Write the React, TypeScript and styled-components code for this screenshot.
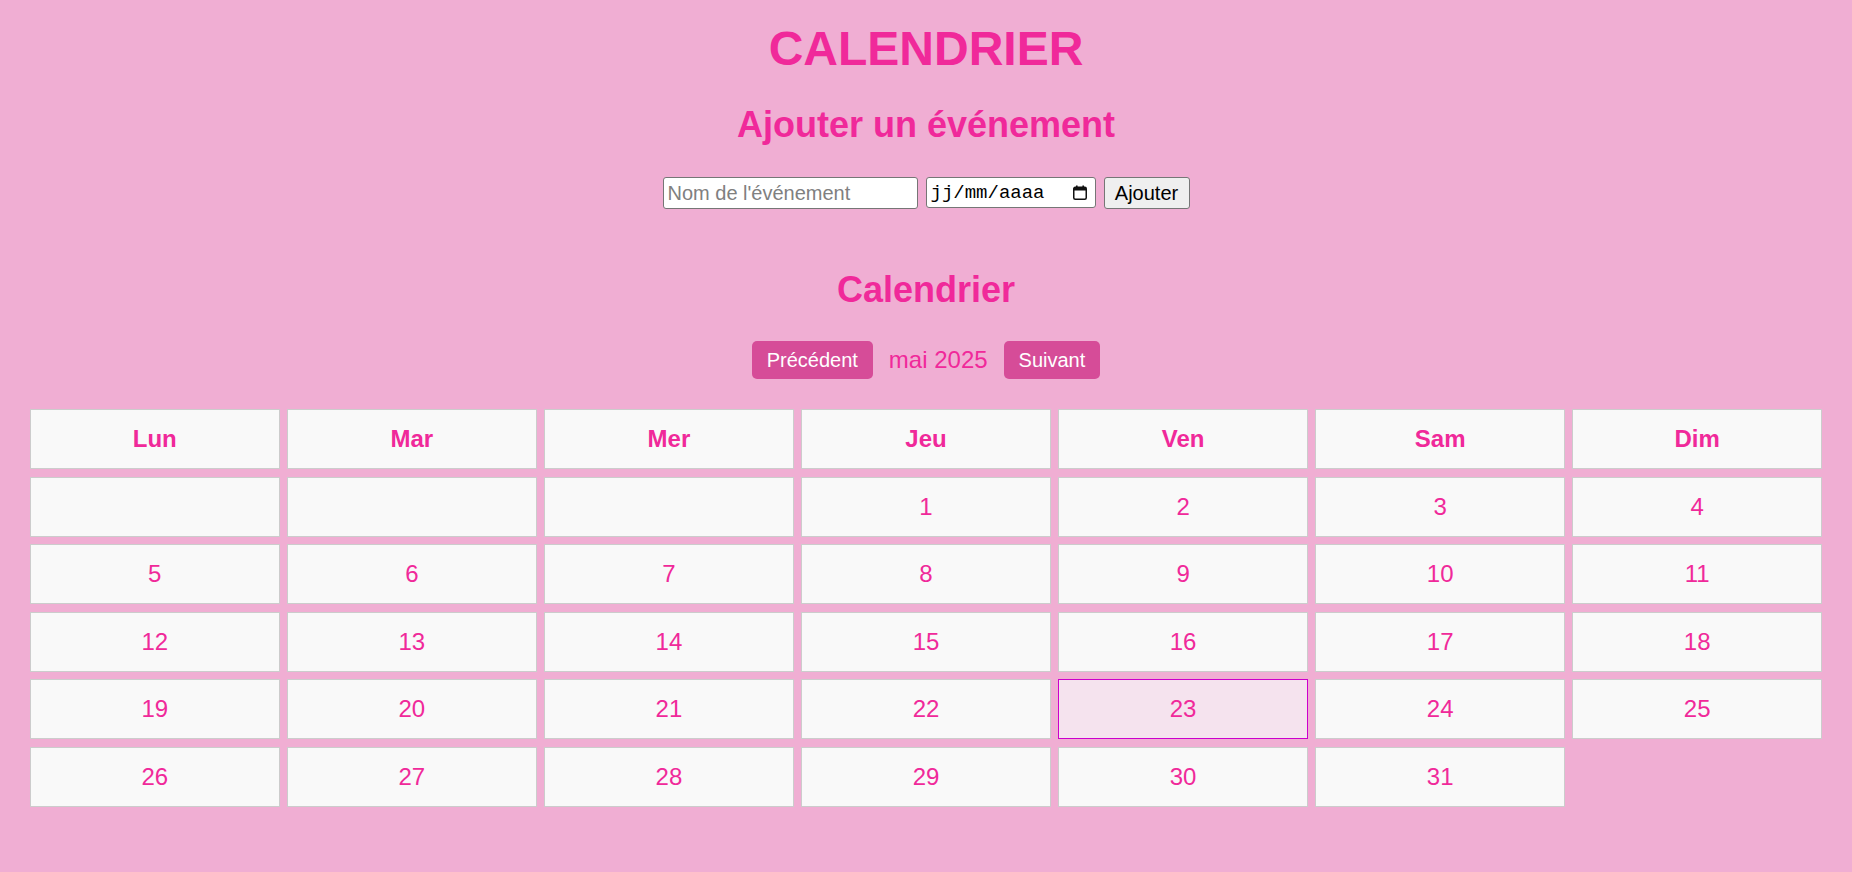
import React from 'react';
import styled, { createGlobalStyle } from 'styled-components';

const GlobalStyle = createGlobalStyle`
  html, body {
    margin: 0;
    padding: 0;
    background: #f0aed3;
  }
  body {
    font-family: "Liberation Sans", Arial, sans-serif;
  }
`;

const PINK = '#f0299a';

const Page = styled.div`
  display: flex;
  flex-direction: column;
  align-items: center;
  padding: 0 30px 40px;
  min-height: 872px;
  box-sizing: border-box;
  color: ${PINK};
`;

const Title = styled.h1`
  margin: 21px 0 0;
  font-size: 48px;
  line-height: 55px;
  font-weight: 700;
`;

const SectionTitle = styled.h2<{ $gap: number }>`
  margin: ${(p) => p.$gap}px 0 0;
  font-size: 36px;
  line-height: 41px;
  font-weight: 700;
`;

const Form = styled.form`
  margin-top: 32px;
  display: flex;
  align-items: center;
  gap: 8px;
  height: 32px;
`;

const TextInput = styled.input`
  box-sizing: border-box;
  width: 255px;
  height: 32px;
  border: 1px solid #767676;
  border-radius: 3px;
  padding: 0 4px;
  background: #fff;
  color: #000;
  font: 20px "Liberation Sans", Arial, sans-serif;
  outline: none;
  &::placeholder {
    color: #808080;
  }
`;

const DateField = styled.div`
  box-sizing: border-box;
  width: 170px;
  height: 31px;
  border: 1px solid #767676;
  border-radius: 3px;
  background: #fff;
  display: flex;
  align-items: center;
  justify-content: space-between;
  padding: 0 8px 0 4px;
  align-self: flex-start;
`;

const DateText = styled.span`
  font: 19px "Liberation Mono", "DejaVu Sans Mono", monospace;
  color: #000;
`;

const AddButton = styled.button`
  box-sizing: border-box;
  width: 86px;
  height: 32px;
  border: 1px solid #767676;
  border-radius: 3px;
  background: #efefef;
  color: #000;
  font: 20px "Liberation Sans", Arial, sans-serif;
  padding: 0;
`;

const Nav = styled.div`
  margin-top: 31px;
  display: flex;
  align-items: center;
  gap: 16px;
`;

const NavButton = styled.button`
  height: 38px;
  padding: 0 15px;
  border: none;
  border-radius: 5px;
  background: #d64c98;
  color: #fff;
  font: 20px "Liberation Sans", Arial, sans-serif;
`;

const MonthLabel = styled.span`
  font-size: 24px;
  color: ${PINK};
`;

const Grid = styled.div`
  margin-top: 30px;
  align-self: stretch;
  display: grid;
  grid-template-columns: repeat(7, 1fr);
  gap: 7.5px;
`;

const Cell = styled.div<{ $head?: boolean; $today?: boolean }>`
  box-sizing: border-box;
  border: 1px solid ${(p) => (p.$today ? '#cc00cc' : '#cccccc')};
  background: ${(p) => (p.$today ? '#f5e3ee' : '#f9f9f9')};
  padding: 15px;
  font-size: 24px;
  line-height: 28px;
  height: 60px;
  text-align: center;
  font-weight: ${(p) => (p.$head ? 700 : 400)};
  color: ${PINK};
`;

const CalendarIcon = () => (
  <svg width="14" height="15" viewBox="0 0 14 15" aria-hidden="true">
    <rect x="0.75" y="2.25" width="12.5" height="12" rx="1.5" fill="none" stroke="#111" strokeWidth="1.5" />
    <rect x="1" y="2.5" width="12" height="3" fill="#111" />
    <rect x="3" y="0.5" width="1.6" height="2.5" fill="#111" />
    <rect x="9.4" y="0.5" width="1.6" height="2.5" fill="#111" />
  </svg>
);

const DAYS = ['Lun', 'Mar', 'Mer', 'Jeu', 'Ven', 'Sam', 'Dim'];
const LEADING = 3;
const DAYS_IN_MONTH = 31;
const TODAY = 23;

export default function App() {
  const cells: (number | null)[] = [
    ...Array.from({ length: LEADING }, () => null),
    ...Array.from({ length: DAYS_IN_MONTH }, (_, i) => i + 1),
  ];
  return (
    <>
      <GlobalStyle />
      <Page>
        <Title>CALENDRIER</Title>
        <SectionTitle $gap={28}>Ajouter un événement</SectionTitle>
        <Form onSubmit={(e) => e.preventDefault()}>
          <TextInput type="text" placeholder="Nom de l'événement" />
          <DateField>
            <DateText>jj/mm/aaaa</DateText>
            <CalendarIcon />
          </DateField>
          <AddButton type="submit">Ajouter</AddButton>
        </Form>
        <SectionTitle $gap={60}>Calendrier</SectionTitle>
        <Nav>
          <NavButton>Précédent</NavButton>
          <MonthLabel>mai 2025</MonthLabel>
          <NavButton>Suivant</NavButton>
        </Nav>
        <Grid>
          {DAYS.map((d) => (
            <Cell key={d} $head>
              {d}
            </Cell>
          ))}
          {cells.map((n, i) => (
            <Cell key={i} $today={n === TODAY}>
              {n ?? ''}
            </Cell>
          ))}
        </Grid>
      </Page>
    </>
  );
}
